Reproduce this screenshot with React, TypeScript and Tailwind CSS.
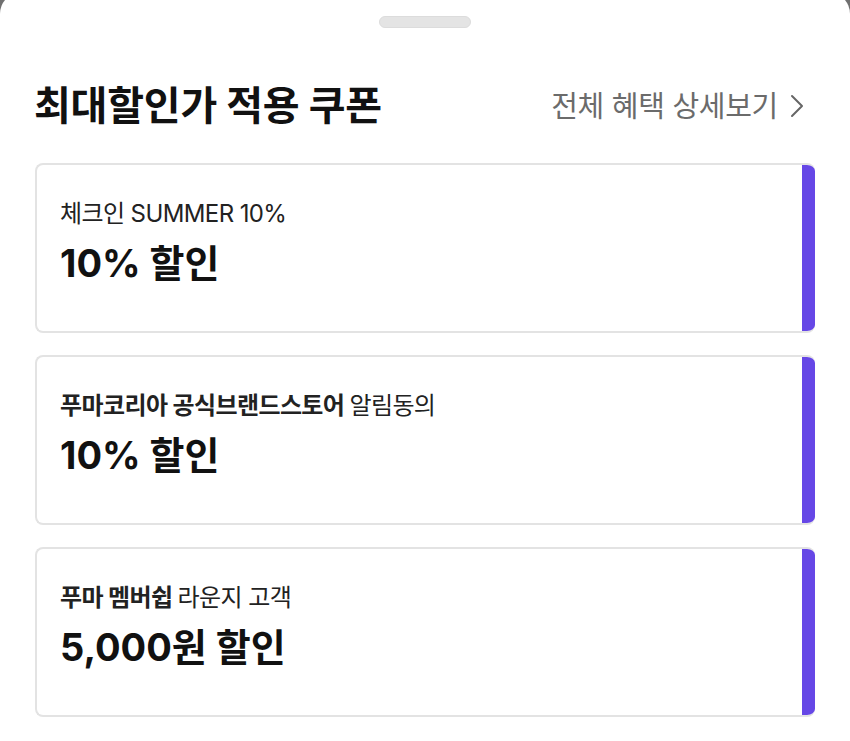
import React from "react";

interface Coupon {
  id: string;
  strong?: string;
  rest: string;
  amount: string;
}

const coupons: Coupon[] = [
  { id: "c1", rest: "체크인 SUMMER 10%", amount: "10% 할인" },
  { id: "c2", strong: "푸마코리아 공식브랜드스토어", rest: "알림동의", amount: "10% 할인" },
  { id: "c3", strong: "푸마 멤버쉽", rest: "라운지 고객", amount: "5,000원 할인" },
];

const font = { fontFamily: 'Inter, "Noto Sans CJK KR", "Noto Sans", sans-serif' };

export default function App() {
  return (
    <div className="w-[850px] h-[741px] overflow-hidden bg-[#707070]" style={font}>
      <div className="-mt-[8px] h-[760px] bg-white rounded-t-[22px] flex flex-col">
        {/* 핸들 */}
        <div className="flex justify-center pt-[24px]">
          <div className="w-[92px] h-[12px] rounded-full bg-[#e4e4e4] border border-[#dcdcdc]" />
        </div>

        {/* 헤더 */}
        <div className="flex items-center justify-between pl-[34px] pr-[46px] mt-[56px] h-[44px]">
          <h2 className="text-[40px] font-bold text-[#111] tracking-[-0.005em] leading-none">
            최대할인가 적용 쿠폰
          </h2>
          <button className="flex items-center gap-[12px] text-[29px] text-[#6b6b6b] leading-none">
            <span className="tracking-[-0.01em]">전체 혜택 상세보기</span>
            <svg width="14" height="24" viewBox="0 0 14 24" fill="none">
              <path d="M2 2l10 10-10 10" stroke="#666" strokeWidth="2" strokeLinecap="round" strokeLinejoin="round" />
            </svg>
          </button>
        </div>

        {/* 쿠폰 목록 */}
        <div className="flex flex-col gap-[22px] pl-[35px] pr-[35px] mt-[35px]">
          {coupons.map((c) => (
            <div
              key={c.id}
              className="h-[170px] flex rounded-[8px] border-2 border-[#e3e3e3] border-r-0 bg-white overflow-hidden"
            >
              <div className="flex-1 flex flex-col justify-center pl-[23px] pb-[12px]">
                <p className="text-[24px] text-[#222] tracking-[-0.025em] leading-[30px]">
                  {c.strong && <span className="font-bold">{c.strong} </span>}
                  {c.rest}
                </p>
                <p className="mt-[12px] text-[38px] font-bold text-[#111] leading-[44px]">
                  {c.amount}
                </p>
              </div>
              <div className="w-[13px] bg-[#6647e6] -my-[2px]" />
            </div>
          ))}
        </div>
      </div>
    </div>
  );
}
